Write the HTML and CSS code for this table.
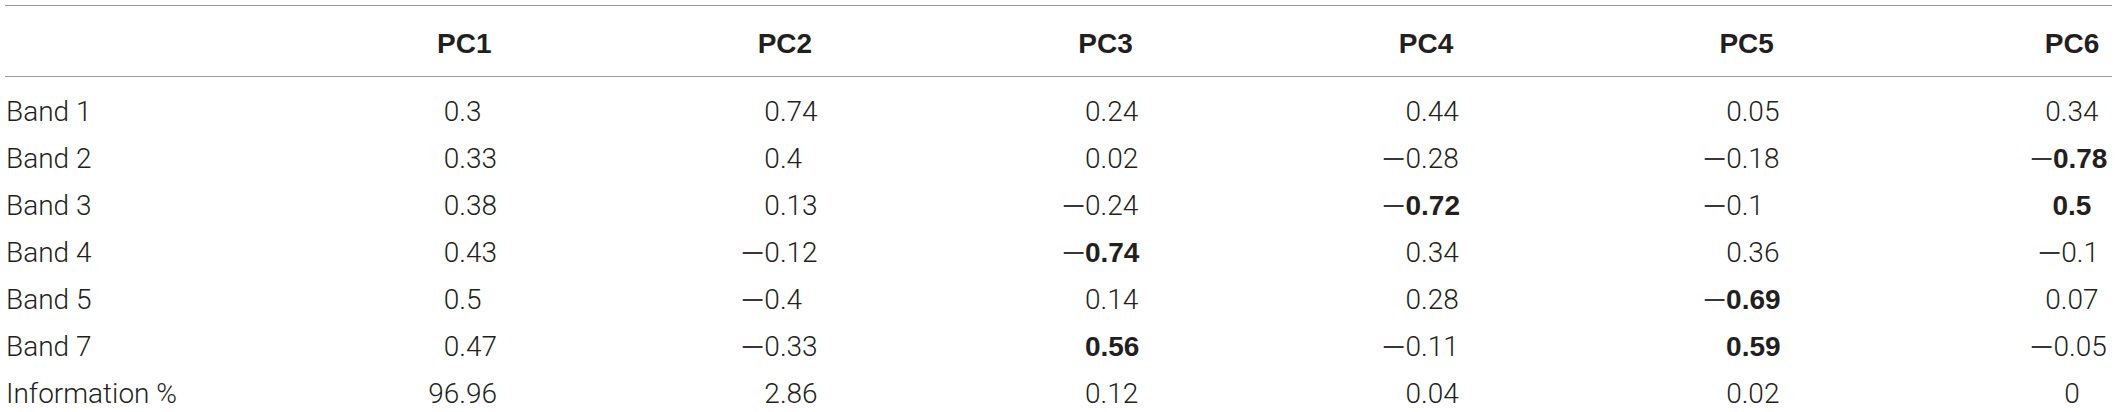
FILE: index.html
```html
<!DOCTYPE html>
<html lang="en">
<head>
<meta charset="utf-8">
<title>PCA loadings</title>
<link rel="stylesheet" href="styles.css">
</head>
<body>
<div class="table">
  <div class="row head">
    <div class="lab"></div>
    <div class="hc">PC1</div>
    <div class="hc">PC2</div>
    <div class="hc">PC3</div>
    <div class="hc">PC4</div>
    <div class="hc">PC5</div>
    <div class="hc c6">PC6</div>
  </div>
  <div class="body">
    <div class="row">
      <div class="lab">Band 1</div>
      <div class="n"><span class="i">0</span><span class="f">.3</span></div>
      <div class="n"><span class="i">0</span><span class="f">.74</span></div>
      <div class="n"><span class="i">0</span><span class="f">.24</span></div>
      <div class="n"><span class="i">0</span><span class="f">.44</span></div>
      <div class="n"><span class="i">0</span><span class="f">.05</span></div>
      <div class="c6">0.34</div>
    </div>
    <div class="row">
      <div class="lab">Band 2</div>
      <div class="n"><span class="i">0</span><span class="f">.33</span></div>
      <div class="n"><span class="i">0</span><span class="f">.4</span></div>
      <div class="n"><span class="i">0</span><span class="f">.02</span></div>
      <div class="n"><span class="i"><span class="m">−</span>0</span><span class="f">.28</span></div>
      <div class="n"><span class="i"><span class="m">−</span>0</span><span class="f">.18</span></div>
      <div class="c6"><span class="m">−</span><b>0.78</b></div>
    </div>
    <div class="row">
      <div class="lab">Band 3</div>
      <div class="n"><span class="i">0</span><span class="f">.38</span></div>
      <div class="n"><span class="i">0</span><span class="f">.13</span></div>
      <div class="n"><span class="i"><span class="m">−</span>0</span><span class="f">.24</span></div>
      <div class="n"><span class="i"><span class="m">−</span><b>0</b></span><span class="f"><b>.72</b></span></div>
      <div class="n"><span class="i"><span class="m">−</span>0</span><span class="f">.1</span></div>
      <div class="c6"><b>0.5</b></div>
    </div>
    <div class="row">
      <div class="lab">Band 4</div>
      <div class="n"><span class="i">0</span><span class="f">.43</span></div>
      <div class="n"><span class="i"><span class="m">−</span>0</span><span class="f">.12</span></div>
      <div class="n"><span class="i"><span class="m">−</span><b>0</b></span><span class="f"><b>.74</b></span></div>
      <div class="n"><span class="i">0</span><span class="f">.34</span></div>
      <div class="n"><span class="i">0</span><span class="f">.36</span></div>
      <div class="c6"><span class="m">−</span>0.1</div>
    </div>
    <div class="row">
      <div class="lab">Band 5</div>
      <div class="n"><span class="i">0</span><span class="f">.5</span></div>
      <div class="n"><span class="i"><span class="m">−</span>0</span><span class="f">.4</span></div>
      <div class="n"><span class="i">0</span><span class="f">.14</span></div>
      <div class="n"><span class="i">0</span><span class="f">.28</span></div>
      <div class="n"><span class="i"><span class="m">−</span><b>0</b></span><span class="f"><b>.69</b></span></div>
      <div class="c6">0.07</div>
    </div>
    <div class="row">
      <div class="lab">Band 7</div>
      <div class="n"><span class="i">0</span><span class="f">.47</span></div>
      <div class="n"><span class="i"><span class="m">−</span>0</span><span class="f">.33</span></div>
      <div class="n"><span class="i"><b>0</b></span><span class="f"><b>.56</b></span></div>
      <div class="n"><span class="i"><span class="m">−</span>0</span><span class="f">.11</span></div>
      <div class="n"><span class="i"><b>0</b></span><span class="f"><b>.59</b></span></div>
      <div class="c6"><span class="m">−</span>0.05</div>
    </div>
    <div class="row">
      <div class="lab">Information %</div>
      <div class="n"><span class="i">96</span><span class="f">.96</span></div>
      <div class="n"><span class="i">2</span><span class="f">.86</span></div>
      <div class="n"><span class="i">0</span><span class="f">.12</span></div>
      <div class="n"><span class="i">0</span><span class="f">.04</span></div>
      <div class="n"><span class="i">0</span><span class="f">.02</span></div>
      <div class="c6">0</div>
    </div>
  </div>
</div>
</body>
</html>
```

FILE: styles.css
```css
html, body {
  margin: 0;
  padding: 0;
  background: #ffffff;
}

body {
  font-family: Roboto, "Liberation Sans", Arial, sans-serif;
  font-weight: 300;
  font-size: 28px;
  color: #231f20;
}

.table {
  margin: 5px 0 0 5px;
  width: 2107px;
}

.row {
  display: grid;
  grid-template-columns: 299px repeat(5, 320.6px) 205px;
  height: 47px;
  line-height: 47px;
  white-space: nowrap;
}

.head {
  border-top: 1px solid #9a9a9a;
  border-bottom: 1px solid #9a9a9a;
  padding-top: 6px;
  box-sizing: border-box;
  height: 72px;
}

.hc {
  text-align: center;
  font-family: "Liberation Sans", Arial, sans-serif;
  font-weight: 700;
  line-height: 64px;
}

.body {
  padding-top: 11px;
}

.lab {
  padding-left: 1px;
}

.n {
  display: flex;
}

.i {
  width: calc(50% - 5px);
  text-align: right;
}

.f {
  text-align: left;
}

.c6 {
  text-align: center;
  padding-left: 125px;
}

b {
  font-family: "Liberation Sans", Arial, sans-serif;
  font-weight: 700;
}

.m {
  display: inline-block;
  font-family: "Liberation Sans", Arial, sans-serif;
  font-weight: 400;
  transform: scaleX(1.45);
  transform-origin: right center;
  color: #3a3536;
}
```
